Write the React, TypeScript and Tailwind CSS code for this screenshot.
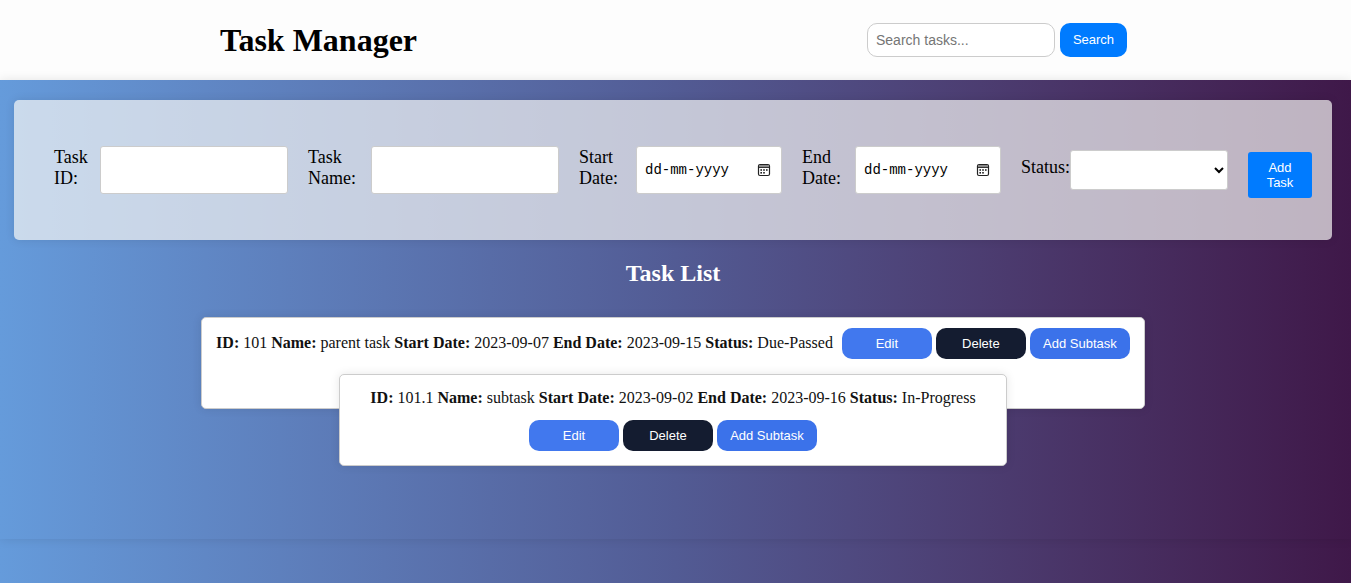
import React from 'react';

type Task = {
  id: string;
  name: string;
  start: string;
  end: string;
  status: string;
};

const parentTask: Task = { id: '101', name: 'parent task', start: '2023-09-07', end: '2023-09-15', status: 'Due-Passed' };
const subTask: Task = { id: '101.1', name: 'subtask', start: '2023-09-02', end: '2023-09-16', status: 'In-Progress' };

const fieldLabel = 'mb-[5px] shrink-0 text-[18px] leading-[21px] text-black';
const fieldInput =
  'h-12 w-full rounded-[3px] border border-[#ccc] bg-white px-2 text-[13px] text-black outline-none';

function CalendarIcon() {
  return (
    <svg viewBox="0 0 14 14" className="h-[14px] w-[14px]" aria-hidden="true">
      <rect x="1.5" y="1.5" width="11" height="11" rx="1.5" fill="none" stroke="#222" strokeWidth="1.2" />
      <rect x="2" y="2" width="10" height="2" fill="#888" />
      <path d="M2 4.5h10" stroke="#333" strokeWidth="1" />
      <g fill="#222">
        <rect x="3.4" y="6.2" width="1.6" height="1.6" />
        <rect x="6.2" y="6.2" width="1.6" height="1.6" />
        <rect x="9" y="6.2" width="1.6" height="1.6" />
        <rect x="3.4" y="9" width="1.6" height="1.6" />
        <rect x="6.2" y="9" width="1.6" height="1.6" />
      </g>
    </svg>
  );
}

function DateField({ id }: { id: string }) {
  return (
    <div className="relative min-w-0 grow basis-[146px]">
      <input
        id={id}
        type="text"
        placeholder="dd-mm-yyyy"
        className="h-12 w-full rounded-[3px] border border-[#ccc] bg-white px-2 font-['Liberation_Mono',monospace] text-[14px] text-black outline-none placeholder:text-black placeholder:opacity-100"
      />
      <button type="button" aria-label="Open calendar" className="absolute top-[17px] right-[11px]">
        <CalendarIcon />
      </button>
    </div>
  );
}

function TaskText({ task }: { task: Task }) {
  return (
    <p className="text-[16px] leading-[18px] text-[#111]">
      <strong>ID:</strong> {task.id} <strong>Name:</strong> {task.name} <strong>Start Date:</strong> {task.start}{' '}
      <strong>End Date:</strong> {task.end} <strong>Status:</strong> {task.status}
    </p>
  );
}

function TaskActions() {
  const base = 'h-[31px] rounded-[10px] text-[13px] text-white';
  return (
    <div className="flex shrink-0 gap-1 font-['Liberation_Sans',Arial,sans-serif]">
      <button type="button" className={`${base} w-[90px] bg-[#4178ee]`}>Edit</button>
      <button type="button" className={`${base} w-[90px] bg-[#141c30]`}>Delete</button>
      <button type="button" className={`${base} w-[100px] bg-[#3b72ea]`}>Add Subtask</button>
    </div>
  );
}

export default function App() {
  return (
    <div className="min-h-screen bg-linear-to-r from-[#659bdb] via-[#525b94] to-[#3f1849] font-['Liberation_Serif','Times_New_Roman',serif]">
      <header className="bg-[#fdfdfd] pr-1">
        <div className="mx-auto flex h-20 max-w-[907px] items-center justify-between">
          <h1 className="text-[32px] font-bold leading-9 text-black">Task Manager</h1>
          <form className="flex gap-[5px] font-['Liberation_Sans',Arial,sans-serif]" onSubmit={(e) => e.preventDefault()}>
            <input
              type="search"
              aria-label="Search tasks"
              placeholder="Search tasks..."
              className="h-[34px] w-[188px] rounded-[10px] border border-[#ccc] bg-white px-2 text-[14px] outline-none placeholder:text-[#757575]"
            />
            <button type="submit" className="h-[34px] w-[67px] rounded-[10px] bg-[#007bff] text-[13px] text-white">
              Search
            </button>
          </form>
        </div>
      </header>

      <main className="pt-5 pr-[19px] pb-[73px] pl-[14px] shadow-[0_0_10px_rgba(0,0,0,0.1)]">
        <form
          className="flex items-center gap-5 rounded-[5px] bg-[#f5f5f3]/70 py-[42px] pr-5 pl-10 shadow-[0_0_10px_rgba(0,0,0,0.1)]"
          onSubmit={(e) => e.preventDefault()}
        >
          <div className="flex grow basis-[234px] items-center">
            <label htmlFor="task-id" className={`${fieldLabel} w-[46px]`}>Task<br />ID:</label>
            <input id="task-id" type="text" className={fieldInput} />
          </div>
          <div className="flex grow basis-[251px] items-center">
            <label htmlFor="task-name" className={`${fieldLabel} w-[63px]`}>Task<br />Name:</label>
            <input id="task-name" type="text" className={fieldInput} />
          </div>
          <div className="flex grow basis-[203px] items-center">
            <label htmlFor="start-date" className={`${fieldLabel} w-[57px]`}>Start<br />Date:</label>
            <DateField id="start-date" />
          </div>
          <div className="flex grow basis-[199px] items-center">
            <label htmlFor="end-date" className={`${fieldLabel} w-[53px]`}>End<br />Date:</label>
            <DateField id="end-date" />
          </div>
          <div className="flex grow basis-[207px] items-center">
            <label htmlFor="status" className={`${fieldLabel} w-[49px]`}>Status:</label>
            <select
              id="status"
              defaultValue=""
              className="h-10 w-full rounded-[3px] border border-[#ccc] bg-white font-['Liberation_Sans',Arial,sans-serif] text-[13px] text-black"
            >
              <option value=""></option>
              <option>In-Progress</option>
              <option>Completed</option>
              <option>Due-Passed</option>
            </select>
          </div>
          <button
            type="submit"
            className="mt-[10px] w-16 shrink-0 rounded-[3px] bg-[#007bff] px-3 py-2 font-['Liberation_Sans',Arial,sans-serif] text-[13px] leading-[15px] text-white"
          >
            Add Task
          </button>
        </form>

        <h2 className="mt-5 text-center text-[24px] font-bold leading-[27px] text-white">Task List</h2>

        <ul className="mt-[30px] flex flex-col items-center">
          <li className="flex flex-col items-center">
            <article className="flex h-[92px] items-start gap-[9px] rounded-[5px] border border-[#ccc] bg-white px-[14px] pt-[10px] shadow-[0_0_10px_rgba(0,0,0,0.1)]">
              <div className="pt-[6px]">
                <TaskText task={parentTask} />
              </div>
              <TaskActions />
            </article>
            <article className="relative -mt-[35px] flex h-[92px] flex-col items-center gap-[13px] rounded-[5px] border border-[#ccc] bg-white px-[30px] pt-[14px] shadow-[0_0_10px_rgba(0,0,0,0.1)]">
              <TaskText task={subTask} />
              <TaskActions />
            </article>
          </li>
        </ul>
      </main>
    </div>
  );
}
